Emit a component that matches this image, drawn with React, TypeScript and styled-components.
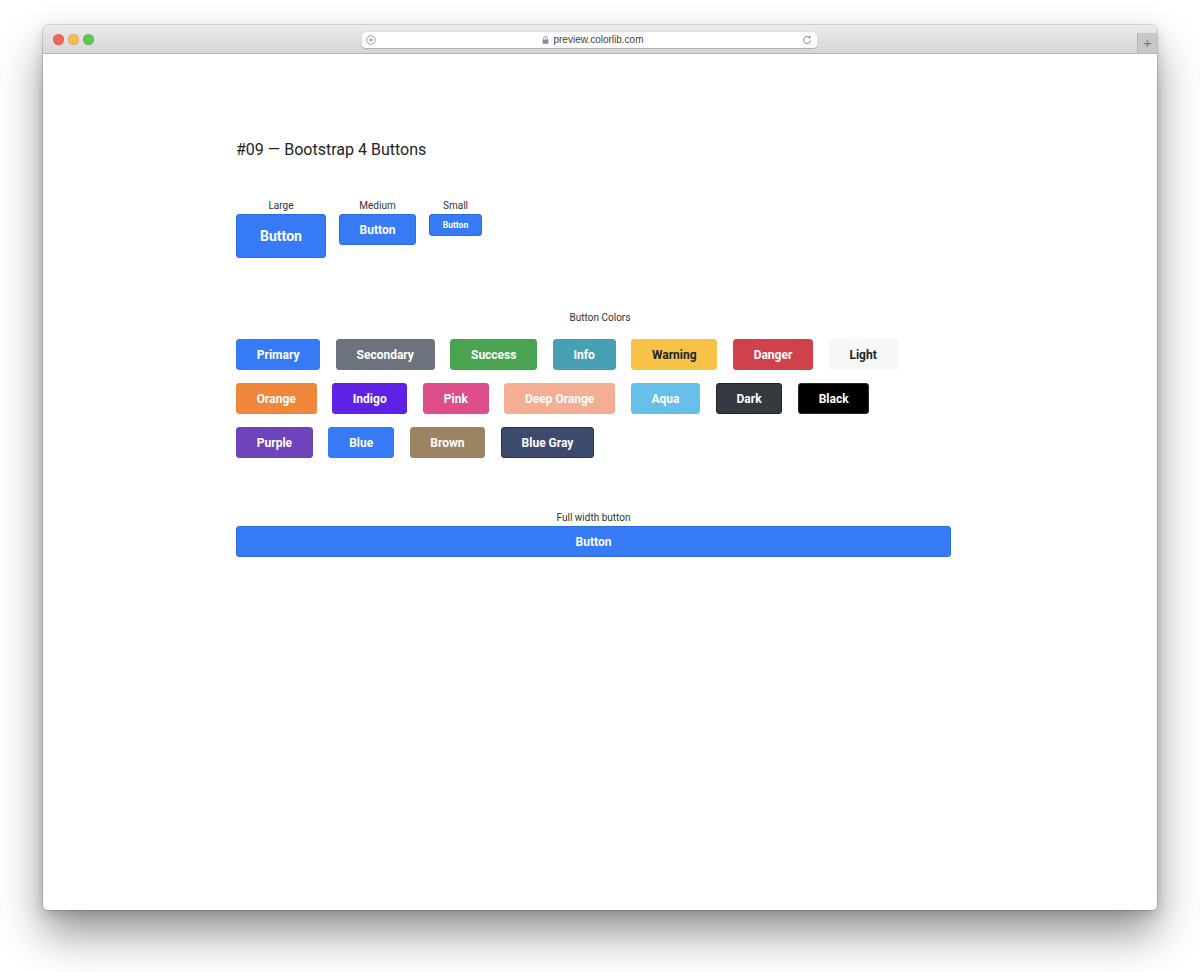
import styled, { createGlobalStyle } from 'styled-components';

const GlobalStyle = createGlobalStyle`
    html, body {
        margin: 0;
        padding: 0;
        background: #ffffff;
    }
    body {
        font-family: Roboto, 'Liberation Sans', Arial, sans-serif;
        color: #212529;
    }
    * {
        box-sizing: border-box;
    }
`;

type Swatch = { label: string; bg: string; fg?: string; edge?: string };

// button colour rows, as laid out in the demo
const colorRows: Swatch[][] = [
    [
        { label: 'Primary', bg: '#367bf5' },
        { label: 'Secondary', bg: '#6c737d' },
        { label: 'Success', bg: '#4aa351' },
        { label: 'Info', bg: '#479fb4' },
        { label: 'Warning', bg: '#f7c245', fg: '#212529' },
        { label: 'Danger', bg: '#d1414c' },
        { label: 'Light', bg: '#f7f8fa', fg: '#212529', edge: '#f7f8fa' },
    ],
    [
        { label: 'Orange', bg: '#f0873a' },
        { label: 'Indigo', bg: '#6021e7' },
        { label: 'Pink', bg: '#dd4e8b' },
        { label: 'Deep Orange', bg: '#f4ae94' },
        { label: 'Aqua', bg: '#66c0ea' },
        { label: 'Dark', bg: '#353a41', edge: '#22262b' },
        { label: 'Black', bg: '#000000', edge: '#2a2a2a' },
    ],
    [
        { label: 'Purple', bg: '#6e44bd' },
        { label: 'Blue', bg: '#367bf5' },
        { label: 'Brown', bg: '#9c8462' },
        { label: 'Blue Gray', bg: '#3e4a6d', edge: '#2a3350' },
    ],
];

const sizes = [
    { label: 'Large', size: 'lg' as const },
    { label: 'Medium', size: 'md' as const },
    { label: 'Small', size: 'sm' as const },
];

function PlusCircle() {
    return (
        <svg width="10" height="10" viewBox="0 0 10 10">
            <circle cx="5" cy="5" r="4.3" fill="none" stroke="#8a8a8a" strokeWidth="0.8" />
            <path d="M5 2.6v4.8M2.6 5h4.8" stroke="#8a8a8a" strokeWidth="0.8" />
        </svg>
    );
}

function Reload() {
    return (
        <svg width="10" height="10" viewBox="0 0 10 10">
            <path
                d="M7.9 3.2A3.4 3.4 0 1 0 8.4 5.6"
                fill="none"
                stroke="#707070"
                strokeWidth="0.9"
            />
            <path d="M6.2 1.6 8.2 3.4 8.6 1.2Z" fill="#707070" />
        </svg>
    );
}

function Lock() {
    return (
        <svg width="7" height="8" viewBox="0 0 7 8">
            <path d="M1.6 3.6V2.4a1.9 1.9 0 0 1 3.8 0v1.2" fill="none" stroke="#8a8a8a" strokeWidth="0.9" />
            <rect x="0.6" y="3.5" width="5.8" height="4.2" rx="0.6" fill="#8a8a8a" />
        </svg>
    );
}

export default function App() {
    return (
        <>
            <GlobalStyle />
            <Stage>
                <Window>
                    <TitleBar>
                        <Lights>
                            <Light color="#ec6559" />
                            <Light color="#f4bd4f" />
                            <Light color="#5fc454" />
                        </Lights>
                        <AddressBar>
                            <PlusCircle />
                            <Url>
                                <Lock />
                                <span>preview.colorlib.com</span>
                            </Url>
                            <Reload />
                        </AddressBar>
                        <NewTab>+</NewTab>
                    </TitleBar>
                    <Page>
                        <Container>
                            <Heading>#09 — Bootstrap 4 Buttons</Heading>

                            <SizeRow>
                                {sizes.map((s) => (
                                    <SizeColumn key={s.label}>
                                        <Caption>{s.label}</Caption>
                                        <SizeButton size={s.size}>Button</SizeButton>
                                    </SizeColumn>
                                ))}
                            </SizeRow>

                            <Section>
                                <CenterCaption>Button Colors</CenterCaption>
                                <ColorRows>
                                    {colorRows.map((row, i) => (
                                        <ColorRow key={i}>
                                            {row.map((c) => (
                                                <ColorButton
                                                    key={c.label}
                                                    bg={c.bg}
                                                    fg={c.fg}
                                                    edge={c.edge}
                                                >
                                                    {c.label}
                                                </ColorButton>
                                            ))}
                                        </ColorRow>
                                    ))}
                                </ColorRows>
                            </Section>

                            <Section>
                                <CenterCaption tight>Full width button</CenterCaption>
                                <BlockButton>Button</BlockButton>
                            </Section>
                        </Container>
                    </Page>
                </Window>
            </Stage>
        </>
    );
}

const Stage = styled.div`
    width: 1200px;
    height: 972px;
    padding: 25px 43px 0;
`;

const Window = styled.div`
    width: 1114px;
    height: 885px;
    border-radius: 5px;
    overflow: hidden;
    display: flex;
    flex-direction: column;
    background: #ffffff;
    box-shadow: 0 0 0 1px rgba(0, 0, 0, 0.12), 0 24px 44px rgba(0, 0, 0, 0.42),
        0 4px 12px rgba(0, 0, 0, 0.15);
`;

const TitleBar = styled.div`
    height: 29px;
    flex-shrink: 0;
    display: grid;
    grid-template-columns: 319px 455px 1fr;
    align-items: center;
    background: linear-gradient(#ebe9eb, #d7d5d7);
    border-bottom: 1px solid #b9b8b9;
`;

const Lights = styled.div`
    display: flex;
    gap: 4px;
    padding-left: 10px;
`;

const Light = styled.span<{ color: string }>`
    width: 11px;
    height: 11px;
    border-radius: 50%;
    background: ${(p) => p.color};
    box-shadow: inset 0 0 0 0.5px rgba(0, 0, 0, 0.12);
`;

const AddressBar = styled.div`
    height: 16px;
    margin-top: 1px;
    border-radius: 4px;
    background: #ffffff;
    box-shadow: 0 0.5px 1px rgba(0, 0, 0, 0.2);
    display: flex;
    align-items: center;
    justify-content: space-between;
    padding: 0 5px 0 4px;
`;

const Url = styled.div`
    display: flex;
    align-items: center;
    gap: 4px;
    font-family: 'Liberation Sans', Arial, sans-serif;
    font-size: 10px;
    color: #444;
    margin-left: 8px;
`;

const NewTab = styled.div`
    justify-self: end;
    align-self: end;
    width: 20px;
    height: 20px;
    background: #c9c8c9;
    border-left: 1px solid #b5b4b5;
    color: #7a7a7a;
    font-family: 'Liberation Sans', Arial, sans-serif;
    font-size: 15px;
    line-height: 19px;
    text-align: center;
`;

const Page = styled.main`
    flex: 1;
    background: #ffffff;
    padding: 86px 0 0 193px;
`;

const Container = styled.div`
    width: 715px;
    display: flex;
    flex-direction: column;
`;

const Heading = styled.h2`
    margin: 0 0 40px;
    font-size: 16px;
    font-weight: 400;
    line-height: 20px;
    color: #212529;
`;

const SizeRow = styled.div`
    display: flex;
    align-items: flex-start;
    gap: 13px;
`;

const SizeColumn = styled.div`
    display: flex;
    flex-direction: column;
    align-items: center;
    gap: 2px;
`;

const Caption = styled.div`
    font-size: 10px;
    line-height: 12px;
    color: #333;
`;

const CenterCaption = styled(Caption)<{ tight?: boolean }>`
    text-align: center;
    padding-left: ${(p) => (p.tight ? '0' : '13px')};
    margin-bottom: ${(p) => (p.tight ? '2px' : '15px')};
`;

const buttonSizes = {
    lg: { w: 90, h: 44, f: 14 },
    md: { w: 77, h: 31, f: 12 },
    sm: { w: 53, h: 22, f: 8.5 },
};

const BaseButton = styled.button`
    border-radius: 3px;
    font-family: Roboto, 'Liberation Sans', Arial, sans-serif;
    font-weight: 700;
    cursor: pointer;
    display: flex;
    align-items: center;
    justify-content: center;
    padding: 0;
`;

const SizeButton = styled(BaseButton)<{ size: 'lg' | 'md' | 'sm' }>`
    width: ${(p) => buttonSizes[p.size].w}px;
    height: ${(p) => buttonSizes[p.size].h}px;
    font-size: ${(p) => buttonSizes[p.size].f}px;
    background: #367bf5;
    border: 1px solid #2f6ee0;
    color: #ffffff;
`;

const Section = styled.section`
    margin-top: 54px;
    display: flex;
    flex-direction: column;
`;

const ColorRows = styled.div`
    display: flex;
    flex-direction: column;
    gap: 13px;
`;

const ColorRow = styled.div`
    display: flex;
    gap: 15.5px;
`;

const ColorButton = styled(BaseButton)<{ bg: string; fg?: string; edge?: string }>`
    height: 31px;
    padding: 0 19.8px;
    font-size: 12px;
    background: ${(p) => p.bg};
    color: ${(p) => p.fg ?? '#ffffff'};
    border: 1px solid ${(p) => p.edge ?? p.bg};
`;

const BlockButton = styled(BaseButton)`
    width: 100%;
    height: 31px;
    font-size: 12px;
    background: #367bf5;
    border: 1px solid #2f6ee0;
    color: #ffffff;
`;
